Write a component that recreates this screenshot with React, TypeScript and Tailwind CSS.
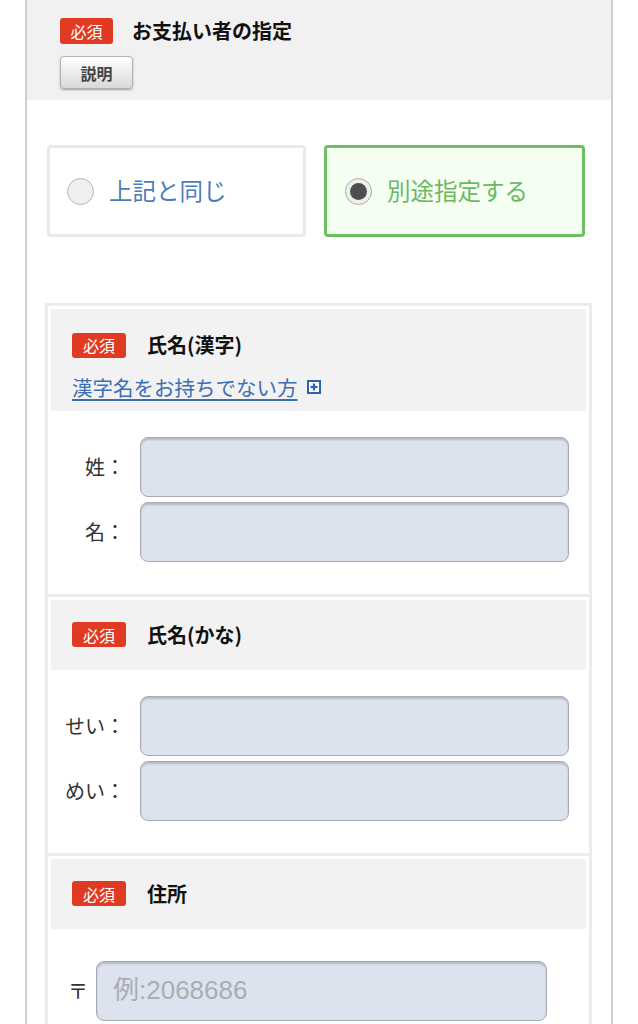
import React from "react";

const font = { fontFamily: '"Noto Sans CJK JP", "Noto Sans", sans-serif' };

function Badge() {
  return (
    <span className="inline-flex h-[25px] w-[54px] shrink-0 items-center justify-center rounded-[3px] bg-[#e03b22] text-[16px] leading-none text-white">
      必須
    </span>
  );
}

function Field({ label }: { label: string }) {
  return (
    <div className="flex items-center">
      <div className="w-[89px] shrink-0 pr-[15px] text-right text-[20px] text-[#333]">{label}</div>
      <div className="h-[60px] w-[429px] rounded-[8px] border border-[#a7acb4] bg-[#dce3ee] shadow-[inset_0_2px_2px_rgba(0,0,0,0.18)]" />
    </div>
  );
}

function SectionHeader({ title, children, tall }: { title: string; children?: React.ReactNode; tall?: boolean }) {
  return (
    <div className={`bg-[#f2f2f2] pl-[21px] ${tall ? "pt-[21px] pb-[8px]" : "flex h-[70px] flex-col justify-center"}`}>
      <div className="flex items-center gap-[21px]">
        <Badge />
        <span className="text-[20px] font-bold text-[#111]">{title}</span>
      </div>
      {children}
    </div>
  );
}

export default function App() {
  return (
    <div className="min-h-[1024px] bg-white" style={font}>
      <div className="ml-[25px] min-h-[1024px] w-[588px] border-x-2 border-[#cfcfcf]">
        {/* Top header */}
        <div className="h-[100px] bg-[#f1f1f1] pl-[33px] pt-[16px]">
          <div className="flex items-center gap-[19px]">
            <span className="inline-flex h-[26px] w-[53px] items-center justify-center rounded-[3px] bg-[#e03b22] text-[16px] leading-none text-white">
              必須
            </span>
            <span className="text-[20px] font-bold leading-[30px] text-[#111]">お支払い者の指定</span>
          </div>
          <button className="mt-[10px] flex h-[33px] w-[73px] items-center justify-center rounded-[4px] border border-[#b3b3b3] bg-gradient-to-b from-[#ffffff] to-[#d9d9d9] text-[16px] font-bold text-[#444] shadow-[0_1px_2px_rgba(0,0,0,0.35)]">
            説明
          </button>
        </div>

        {/* Radio cards */}
        <div className="flex gap-[18px] pl-[20px] pt-[45px]">
          <div className="flex h-[92px] w-[259px] items-center rounded-[4px] border-[3px] border-[#e9e9e9] bg-white pl-[17px]">
            <span className="h-[27px] w-[27px] rounded-full border border-[#b5b5b5] bg-[#efefef]" />
            <span className="ml-[15px] text-[23.5px] text-[#4a7db8]">上記と同じ</span>
          </div>
          <div className="flex h-[92px] w-[261px] items-center rounded-[4px] border-[3px] border-[#6cc062] bg-[#f4fff1] pl-[18px]">
            <span className="flex h-[27px] w-[27px] items-center justify-center rounded-full border border-[#a8a8a8] bg-[#efefef]">
              <span className="h-[17px] w-[17px] rounded-full bg-[#4f4f4f]" />
            </span>
            <span className="ml-[15px] text-[23.5px] text-[#6cb862]">別途指定する</span>
          </div>
        </div>

        {/* Inner box */}
        <div className="ml-[18px] mt-[66px] w-[547px] border-[3px] border-b-0 border-[#ececec]">
          <div className="p-[3px] pb-0">
            <SectionHeader title="氏名(漢字)" tall>
              <div className="mt-[12px] flex items-center gap-[9px]">
                <span className="text-[20.5px] text-[#3b6fb6] underline underline-offset-[3px]">漢字名をお持ちでない方</span>
                <svg width="14" height="14" viewBox="0 0 14 14">
                  <rect x="1" y="1" width="12" height="12" fill="#fff" stroke="#2e62ad" strokeWidth="2" />
                  <rect x="5.9" y="3.5" width="2.2" height="7" fill="#2e62ad" />
                  <rect x="3.5" y="5.9" width="7" height="2.2" fill="#2e62ad" />
                </svg>
              </div>
            </SectionHeader>
            <div className="flex flex-col gap-[5px] pb-[32px] pt-[26px]">
              <Field label="姓：" />
              <Field label="名：" />
            </div>
          </div>
          <div className="border-t-[3px] border-[#ececec] p-[3px] pb-0">
            <SectionHeader title="氏名(かな)" />
            <div className="flex flex-col gap-[5px] pb-[32px] pt-[26px]">
              <Field label="せい：" />
              <Field label="めい：" />
            </div>
          </div>
          <div className="border-t-[3px] border-[#ececec] p-[3px] pb-0">
            <SectionHeader title="住所" />
            <div className="flex items-center pb-[32px] pl-[17px] pt-[32px]">
              <span className="mr-[8px] text-[20px] text-[#333]">〒</span>
              <div
                className="flex h-[60px] w-[451px] items-center rounded-[8px] border border-[#a7acb4] bg-[#dce3ee] pl-[16px] text-[26px] text-[#a9adb4] shadow-[inset_0_2px_2px_rgba(0,0,0,0.18)]"
                style={{ fontFamily: '"Liberation Sans", "Noto Sans CJK JP", sans-serif' }}
              >
                例:2068686
              </div>
            </div>
          </div>
        </div>
      </div>
    </div>
  );
}
